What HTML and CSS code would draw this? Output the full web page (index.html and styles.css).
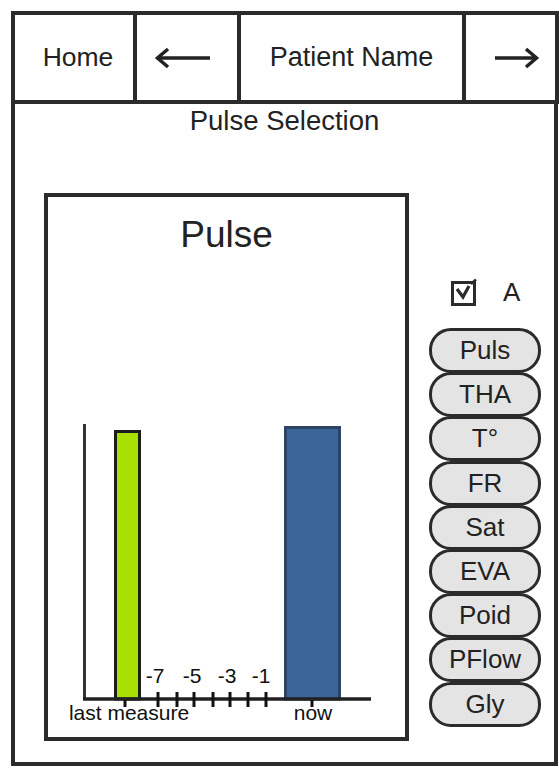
FILE: index.html
```html
<!DOCTYPE html>
<html lang="en">
<head>
    <meta charset="UTF-8">
    <meta name="viewport" content="width=device-width, initial-scale=1.0">
    <title>Pulse Selection</title>
    <link rel="stylesheet" href="styles.css">
</head>
<body>
    <div class="screen">
        <header class="topbar">
            <div class="cell home">Home</div>
            <div class="cell nav prev">
                <svg width="58" height="22" viewBox="0 0 58 22">
                    <path d="M3 11 H56" stroke="#222" stroke-width="3.5" fill="none"/>
                    <path d="M14 2 L3.5 11 L14 20" stroke="#222" stroke-width="3.5" fill="none"/>
                </svg>
            </div>
            <div class="cell patient">Patient Name</div>
            <div class="cell nav next">
                <svg width="46" height="22" viewBox="0 0 46 22">
                    <path d="M1 11 H43" stroke="#222" stroke-width="3.5" fill="none"/>
                    <path d="M32 2 L42.5 11 L32 20" stroke="#222" stroke-width="3.5" fill="none"/>
                </svg>
            </div>
        </header>

        <main class="panel">
            <h1 class="page-title">Pulse Selection</h1>

            <div class="content">
                <section class="chart-box">
                    <h2 class="chart-title">Pulse</h2>
                    <svg class="chart" width="357" height="480" viewBox="0 0 357 480">
                        <!-- bars -->
                        <rect x="67.5" y="174.5" width="24" height="267.5" fill="#a9e004" stroke="#1c1c1c" stroke-width="3"/>
                        <rect x="237.5" y="170.5" width="54" height="271.5" fill="#3a6699" stroke="#2c4566" stroke-width="3"/>

                        <!-- axes -->
                        <line x1="36.5" y1="167" x2="36.5" y2="443" stroke="#333" stroke-width="3"/>
                        <line x1="35" y1="442" x2="323" y2="442" stroke="#222" stroke-width="3.5"/>

                        <!-- day ticks -->
                        <g stroke="#111" stroke-width="3">
                            <line x1="77" y1="443" x2="77" y2="450"/>
                            <line x1="110" y1="435" x2="110" y2="450"/>
                            <line x1="129" y1="435" x2="129" y2="450"/>
                            <line x1="146" y1="435" x2="146" y2="450"/>
                            <line x1="165" y1="435" x2="165" y2="450"/>
                            <line x1="182" y1="435" x2="182" y2="450"/>
                            <line x1="200" y1="435" x2="200" y2="450"/>
                            <line x1="218" y1="435" x2="218" y2="450"/>
                            <line x1="264" y1="443" x2="264" y2="450"/>
                        </g>

                        <g class="axis-label" text-anchor="middle">
                            <text x="107" y="426">-7</text>
                            <text x="144" y="426">-5</text>
                            <text x="179" y="426">-3</text>
                            <text x="213" y="426">-1</text>
                            <text x="81" y="463">last measure</text>
                            <text x="265" y="463">now</text>
                        </g>
                    </svg>
                </section>

                <aside class="side">
                    <label class="check-row">
                        <svg width="28" height="28" viewBox="0 0 28 28">
                            <rect x="1.5" y="4.5" width="22" height="22" fill="#fff" stroke="#2b2b2b" stroke-width="3"/>
                            <path d="M6 11 L12 19 L18 8" stroke="#2b2b2b" stroke-width="3.2" fill="none"/>
                            <path d="M20 6 L25 1.5" stroke="#2b2b2b" stroke-width="2.5" fill="none"/>
                        </svg>
                        <span>A</span>
                    </label>

                    <div class="pills">
                        <button class="pill">Puls</button>
                        <button class="pill">THA</button>
                        <button class="pill">T°</button>
                        <button class="pill">FR</button>
                        <button class="pill">Sat</button>
                        <button class="pill">EVA</button>
                        <button class="pill">Poid</button>
                        <button class="pill">PFlow</button>
                        <button class="pill">Gly</button>
                    </div>
                </aside>
            </div>
        </main>
    </div>
</body>
</html>
```

FILE: styles.css
```css
* {
    box-sizing: border-box;
}
body {
    font-family: "Liberation Sans", Arial, sans-serif;
    margin: 0;
    padding: 0;
    background-color: #fff;
    color: #222;
}
.screen {
    width: 548px;
    margin: 11px 0 0 11px;
}

/* top navigation */
.topbar {
    display: grid;
    grid-template-columns: 118px 104px 225px 93px;
    height: 93px;
    border: 4px solid #2b2b2b;
}
.cell {
    display: flex;
    align-items: center;
    justify-content: center;
    font-size: 26.5px;
    border-left: 4px solid #2b2b2b;
}
.cell.home {
    border-left: none;
    padding-left: 8px;
}
.cell.patient {
    font-size: 27px;
}
.cell.prev {
    padding-right: 8px;
}
.cell.next {
    padding-left: 12px;
}

/* main panel */
.panel {
    width: 547px;
    height: 662px;
    border: 4px solid #2b2b2b;
    border-top: none;
}
.page-title {
    margin: 0;
    padding-top: 1px;
    font-size: 27.5px;
    font-weight: normal;
    line-height: 31px;
    text-align: center;
}
.content {
    display: flex;
    padding: 57px 0 0 29px;
}

.chart-box {
    width: 365px;
    height: 548px;
    border: 4px solid #2b2b2b;
}
.chart-title {
    margin: 0;
    padding-top: 16px;
    font-size: 37px;
    font-weight: normal;
    line-height: 44px;
    text-align: center;
}
.chart {
    display: block;
}
.axis-label {
    font-family: "Liberation Sans", Arial, sans-serif;
    font-size: 21px;
    fill: #111;
}

/* right column */
.side {
    width: 112px;
    margin-left: 20px;
    padding-top: 84px;
}
.check-row {
    display: flex;
    align-items: center;
    gap: 24px;
    padding-left: 22px;
    font-size: 26px;
    height: 30px;
}
.pills {
    display: flex;
    flex-direction: column;
    margin-top: 21px;
}
.pill {
    height: 45px;
    margin-top: -0.8px;
    padding: 0;
    font-family: "Liberation Sans", Arial, sans-serif;
    font-size: 26px;
    color: #222;
    background-color: #e4e4e4;
    border: 3px solid #2b2b2b;
    border-radius: 22px;
    cursor: pointer;
}
.pill:first-child {
    margin-top: 0;
}
```
